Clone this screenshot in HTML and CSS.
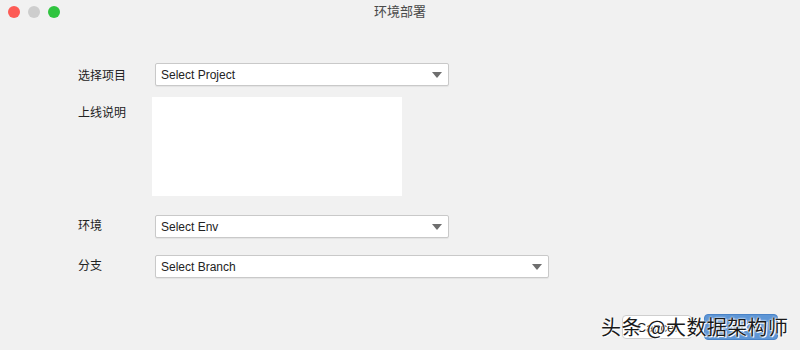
FILE: index.html
```html
<!DOCTYPE html>
<html>
<head>
<meta charset="utf-8">
<link rel="stylesheet" href="styles.css">
</head>
<body>
<div class="window">
  <div class="titlebar">
    <div class="lights">
      <span class="light red"></span>
      <span class="light gray"></span>
      <span class="light green"></span>
    </div>
    <div class="title">环境部署</div>
  </div>
  <div class="form">
    <div class="row row-project">
      <div class="label">选择项目</div>
      <div class="select w293"><span>Select Project</span><span class="arrow"></span></div>
    </div>
    <div class="row row-notes">
      <div class="label label-top">上线说明</div>
      <div class="textarea"></div>
    </div>
    <div class="row row-env">
      <div class="label label-up">环境</div>
      <div class="select w293"><span>Select Env</span><span class="arrow"></span></div>
    </div>
    <div class="row row-branch">
      <div class="label label-up">分支</div>
      <div class="select w393"><span>Select Branch</span><span class="arrow"></span></div>
    </div>
  </div>
  <div class="footer">
    <div class="btn btn-cancel">Cancel</div>
    <div class="btn btn-ok">OK</div>
    <div class="watermark">头条 @大数据架构师</div>
  </div>
</div>
</body>
</html>
```
FILE: styles.css
```css
* { box-sizing: border-box; }
html, body { margin: 0; padding: 0; }
body {
  width: 800px;
  height: 350px;
  background: #f1f1f1;
  font-family: "Liberation Sans", "Noto Sans CJK SC", sans-serif;
  font-size: 12px;
  color: #1e1e1e;
  overflow: hidden;
}
.window { position: relative; height: 350px; }
.titlebar {
  height: 23px;
  display: flex;
  align-items: center;
  position: relative;
}
.lights {
  display: flex;
  gap: 8px;
  padding-left: 8px;
  padding-top: 1px;
}
.light { width: 12px; height: 12px; border-radius: 50%; }
.red { background: #fd5b55; }
.gray { background: #cdcdcd; }
.green { background: #2fc43f; }
.title {
  position: absolute;
  left: 0; right: 0; top: 3px;
  text-align: center;
  font-size: 13px;
  color: #4a4a4a;
  font-family: "Noto Sans CJK SC", sans-serif;
  line-height: 16px;
}
.form {
  padding-left: 78px;
  display: flex;
  flex-direction: column;
}
.row { display: flex; align-items: center; }
.label {
  width: 77px;
  font-family: "Noto Sans CJK SC", sans-serif;
  font-size: 12px;
  color: #222;
  line-height: 16px;
}
.row-project { margin-top: 40px; }
.row-notes { margin-top: 11px; align-items: flex-start; }
.row-env { margin-top: 19px; }
.row-branch { margin-top: 17px; }
.label-top { margin-top: 7px; width: 74px; }
.label-up { position: relative; top: -2px; }
.select {
  height: 23px;
  background: #fff;
  border: 1px solid #c9c9c9;
  border-radius: 2px;
  box-shadow: 0 1px 1px rgba(0,0,0,0.06);
  display: flex;
  align-items: center;
  justify-content: space-between;
  padding: 1px 6px 0 5px;
  color: #222;
  font-size: 12px;
}
.w293 { width: 294px; }
.w393 { width: 394px; }
.arrow {
  width: 0; height: 0;
  border-left: 5px solid transparent;
  border-right: 5px solid transparent;
  border-top: 6px solid #6e6e6e;
}
.textarea {
  width: 250px;
  height: 99px;
  background: #fff;
}
.footer {
  position: absolute;
  right: 22px;
  bottom: 10px;
  display: flex;
  align-items: center;
  gap: 12px;
}
.btn {
  height: 24px;
  border-radius: 4px;
  display: flex;
  align-items: center;
  justify-content: center;
  font-size: 13px;
}
.btn-cancel {
  width: 70px;
  background: #fff;
  border: 1px solid #cfcfcf;
  color: #222;
}
.btn-ok {
  width: 74px;
  height: 26px;
  background: #5e96d6;
  border: 1px solid #4a83c7;
  color: #fff;
}
.watermark {
  position: absolute;
  left: -21px;
  top: 0px;
  font-family: "Noto Sans CJK SC", sans-serif;
  font-size: 20px;
  line-height: 26px;
  letter-spacing: 0.4px;
  color: #1a1a1a;
  white-space: nowrap;
  text-shadow: 0 0 2px #fff, 0 0 2px #fff, 1px 1px 0 #fff;
}
```
